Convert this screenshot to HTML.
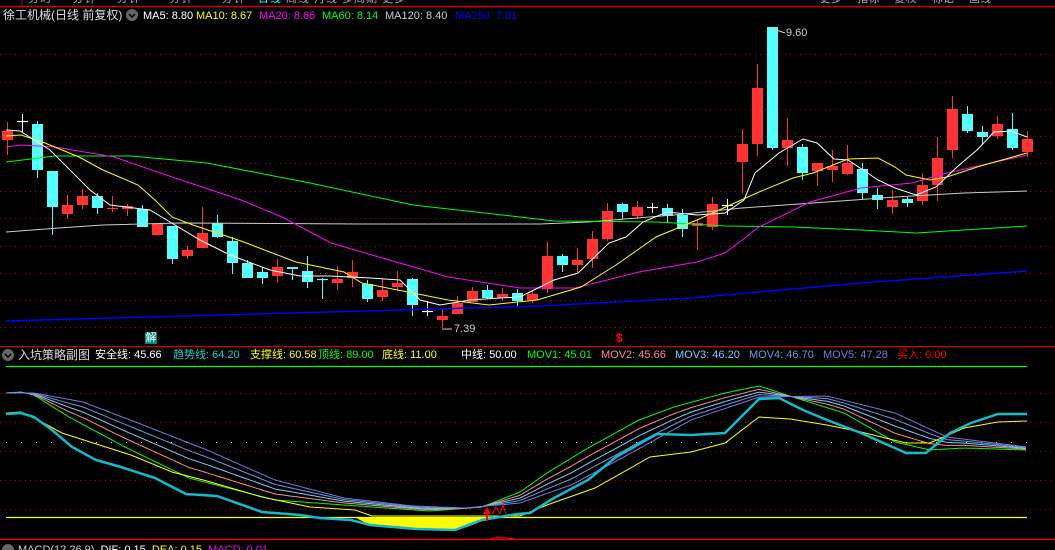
<!DOCTYPE html>
<html><head><meta charset="utf-8"><style>
html,body{margin:0;padding:0;background:#000;width:1055px;height:550px;overflow:hidden}
body{position:relative;font-family:"Liberation Sans","Noto Sans CJK SC",sans-serif;font-size:11px}
.t{position:absolute;white-space:nowrap;line-height:14px}
svg{position:absolute;left:0;top:0}
</style></head><body>
<svg id="s" width="1055" height="550" viewBox="0 0 1055 550"></svg>
<div class="t" style="left:0;top:-8px;color:#aaa;letter-spacing:1px">&nbsp;&nbsp;&nbsp;&nbsp;&nbsp;&nbsp;&nbsp;分时&nbsp;&nbsp;&nbsp;&nbsp;&nbsp;分钟&nbsp;&nbsp;&nbsp;&nbsp;&nbsp;分钟&nbsp;&nbsp;&nbsp;&nbsp;&nbsp;&nbsp;&nbsp;分钟&nbsp;&nbsp;&nbsp;&nbsp;&nbsp;&nbsp;&nbsp;分钟&nbsp;&nbsp;&nbsp;<span style="color:#0ff">日线</span>&nbsp;周线&nbsp;月线&nbsp;多周期&nbsp;更多</div>
<div class="t" style="left:820px;top:-8px;color:#aaa">更多&nbsp;&nbsp;&nbsp;&nbsp;&nbsp;指标&nbsp;&nbsp;&nbsp;&nbsp;&nbsp;复权&nbsp;&nbsp;&nbsp;&nbsp;&nbsp;标记&nbsp;&nbsp;&nbsp;&nbsp;&nbsp;画线</div>
<div class="t" style="left:3px;top:8px;color:#ddd;font-size:12px">徐工机械(日线 前复权)</div>
<div class="t" style="left:143px;top:9px;color:#fff">MA5: 8.80</div>
<div class="t" style="left:196px;top:9px;color:#ff0">MA10: 8.67</div>
<div class="t" style="left:259px;top:9px;color:#f0f">MA20: 8.66</div>
<div class="t" style="left:322px;top:9px;color:#0f0">MA60: 8.14</div>
<div class="t" style="left:385px;top:9px;color:#ccc">MA120: 8.40</div>
<div class="t" style="left:455px;top:9px;color:#0000ff">MA250: 7.81</div>
<div class="t" style="left:786px;top:26px;color:#ccc">9.60</div>
<div class="t" style="left:454px;top:322px;color:#ccc">7.39</div>
<div class="t" style="left:145px;top:332px;width:12px;height:12px;background:#088;color:#fff;font-size:11px;line-height:12px;text-align:center">解</div>
<div class="t" style="left:616px;top:331px;color:#f00;font-weight:bold;font-size:12px">$</div>
<div class="t" style="left:18px;top:348px;color:#ddd;font-size:12px">入坑策略副图</div>
<div class="t" style="left:95px;top:348px;color:#fff">安全线: 45.66</div>
<div class="t" style="left:173px;top:348px;color:#1cc">趋势线: 64.20</div>
<div class="t" style="left:250px;top:348px;color:#ff0">支撑线: 60.58</div>
<div class="t" style="left:318px;top:348px;color:#0f0">顶线: 89.00</div>
<div class="t" style="left:382px;top:348px;color:#ff0">底线: 11.00</div>
<div class="t" style="left:461px;top:348px;color:#fff">中线: 50.00</div>
<div class="t" style="left:527px;top:348px;color:#0f0">MOV1: 45.01</div>
<div class="t" style="left:601px;top:348px;color:#f88">MOV2: 45.66</div>
<div class="t" style="left:675px;top:348px;color:#7cf">MOV3: 46.20</div>
<div class="t" style="left:749px;top:348px;color:#69d">MOV4: 46.70</div>
<div class="t" style="left:823px;top:348px;color:#77d">MOV5: 47.28</div>
<div class="t" style="left:897px;top:348px;color:#f00">买入: 0.00</div>
<div class="t" style="left:18px;top:543px;color:#ccc">MACD(12,26,9)&nbsp;&nbsp;<span style="color:#fff">DIF: 0.15</span>&nbsp;&nbsp;<span style="color:#ff0">DEA: 0.15</span>&nbsp;&nbsp;<span style="color:#f0f">MACD: 0.01</span></div>
<script>
var s=document.getElementById('s'),h='';
function L(x1,y1,x2,y2,c,w,d){h+='<line x1="'+x1+'" y1="'+y1+'" x2="'+x2+'" y2="'+y2+'" stroke="'+c+'" stroke-width="'+(w||1)+'"'+(d?' stroke-dasharray="'+d+'"':'')+'/>';}
function P(pts,c,w){h+='<polyline fill="none" stroke="'+c+'" stroke-width="'+(w||1)+'" points="'+pts.map(p=>p.join(',')).join(' ')+'"/>';}
L(0,6.5,1055,6.5,'#c00',1.5);L(22,0,22,6,'#c00');
[54,82,109,136,163,191,218,246,273,300,327].forEach(y=>L(0,y+.5,1055,y+.5,'#a00',1,'1,4'));
L(0,346.5,1055,346.5,'#c00',1.2);
var C=[[1,131,140,122,155],[2,121,121,114,133],[0,124,170,121,178],[0,171,207,171,235],[1,205,214,195,219],[1,196,205,189,209],[0,196,208,193,214],[1,208,208,196,212],[1,206,209,204,216],[0,209,227,205,227],[1,224,235,224,235],[0,226,259,226,264],[1,250,256,246,259],[1,233,248,207,248],[0,223,237,215,238],[0,241,263,237,274],[0,263,278,260,278],[0,272,278,267,284],[1,267,276,259,283],[0,267,269,267,280],[0,271,282,256,288],[0,279,279,278,299],[1,279,283,266,290],[1,272,278,260,287],[0,284,299,280,302],[1,290,297,279,301],[1,283,287,271,291],[0,279,305,278,316],[2,311,311,301,316],[1,316,320,309,328],[1,303,314,296,314],[1,291,302,287,302],[0,290,298,285,299],[1,294,298,288,301],[0,293,301,289,306],[1,294,300,291,303],
[1,256,289,242,293],[0,256,265,254,272],[1,260,265,248,272],[1,239,259,231,268],[1,211,239,203,241],[0,204,212,203,219],[1,207,216,201,219],[2,207,207,203,213],[0,208,216,204,223],[0,215,229,209,237],[1,223,226,219,250],[1,204,227,197,230],[2,205,205,199,215],[1,144,162,129,193],[1,88,144,64,156],[0,27,148,27,150],[1,140,148,118,166],[0,147,173,144,180],[1,163,171,163,186],[1,166,170,150,182],[1,163,174,145,175],[0,169,193,163,200],[0,195,200,188,209],[1,200,207,190,214],[0,199,203,197,207],[1,185,201,173,205],[1,158,185,137,201],[1,109,150,96,158],[0,114,131,106,133],[0,132,137,126,145],[1,124,136,116,139],[0,129,148,113,150],[1,139,152,131,157]];
var n=C.length;
C.forEach((c,i)=>{var x=Math.round(7+i*(1020/(n-1)));var col=c[0]==1?'#ff3333':c[0]==0?'#55ffff':'#fff';
 L(x+.5,c[3],x+.5,c[4],col,1);
 if(c[2]-c[1]<1){L(x-5,c[1]+.5,x+6,c[1]+.5,col,1.2);}
 else h+='<rect x="'+(x-5)+'" y="'+c[1]+'" width="11" height="'+(c[2]-c[1])+'" fill="'+col+'"/>';});
P([[6,232],[59,228],[103,225],[179,223],[362,224],[540,224],[588,222],[674,215],[742,208],[827,202],[895,197],[964,193],[1027,191]],'#ccc');
P([[6,321],[540,306],[691,298],[861,283],[1027,271]],'#0000ff',1.5);
P([[6,162],[55,156],[131,156],[207,163],[310,183],[413,205],[520,217],[554,221],[657,222],[725,226],[793,227],[861,230],[916,233],[964,230],[1027,226]],'#0f0');
P([[6,147],[21,145],[55,147],[114,157],[172,177],[241,200],[282,217],[331,243],[379,257],[448,277],[520,288],[575,288],[639,272],[697,262],[725,253],[759,227],[810,202],[861,188],[912,183],[947,173],[1027,155]],'#f0f');
P([[6,136],[21,135],[45,143],[79,157],[103,170],[138,185],[155,200],[172,217],[193,225],[241,241],[296,262],[344,272],[362,283],[413,293],[448,300],[489,305],[537,300],[581,287],[616,265],[656,237],[697,220],[759,192],[793,178],[813,173],[848,159],[878,158],[895,167],[906,175],[930,180],[947,177],[977,167],[1027,153]],'#ff0');
P([[6,130],[20,131],[50,150],[90,190],[110,205],[150,210],[170,222],[200,240],[230,255],[270,270],[300,276],[330,276],[370,278],[400,280],[420,300],[440,305],[470,300],[500,298],[520,297],[554,280],[578,273],[609,243],[626,237],[643,222],[667,212],[697,215],[725,213],[744,200],[755,173],[779,153],[803,139],[817,143],[834,159],[848,160],[878,180],[895,188],[916,195],[936,187],[957,167],[977,150],[994,132],[1011,131],[1027,137]],'#fff');
L(770,28,785,33,'#ccc');L(442,329,452,329,'#ccc');
L(6,366.5,1027,366.5,'#0f0',1.2);
[393,422,451,480,509].forEach(y=>L(0,y+.5,1055,y+.5,'#a00',1,'1,4'));
L(6,442.5,1027,442.5,'#fff',1,'1,14');
L(6,517.5,1027,517.5,'#ff0',1.2);
L(0,539.5,1055,539.5,'#e00',1.5);
P([[490,539],[500,537],[506,538],[515,539]],'#f00',1);
function interp(pts,x){for(var i=1;i<pts.length;i++){if(x<=pts[i][0]){var a=pts[i-1],b=pts[i];return a[1]+(b[1]-a[1])*(x-a[0])/(b[0]-a[0]);}}return pts[pts.length-1][1];}
var G=[[6,393],[21,392],[34,395],[69,417],[127,448],[189,478],[275,500],[344,505],[430,511],[482,507],[520,492],[547,473],[588,448],[639,420],[674,407],[725,393],[759,386],[793,397],[844,413],[895,442],[930,450],[964,448],[1027,450]];
var U=[[6,393],[34,393],[83,402],[138,423],[207,450],[275,480],[344,498],[413,506],[465,508],[520,503],[571,485],[622,458],[691,420],[759,397],[827,396],[895,413],[947,437],[1027,447]];
h+='<polygon fill="#ff0" points="300,517 355,517 360,520 370,525 417,529 455,530 470,526 482,520 500,517 300,517"/>';
[['#0f0',0],['#f88',.3],['#7cf',.55],['#69d',.78],['#77d',1]].forEach(c=>{var pts=[];for(var x=6;x<=1027;x+=3){var g=interp(G,x),u=interp(U,x);pts.push([x,(g+(u-g)*c[1]).toFixed(1)]);}P(pts,c[0],1);});
P([[6,413],[21,412],[38,420],[62,433],[90,442],[131,455],[172,472],[207,481],[262,497],[310,507],[355,510],[372,516],[520,516],[547,505],[595,488],[650,457],[691,452],[725,443],[759,417],[790,419],[827,425],[861,432],[906,443],[930,443],[964,428],[998,422],[1027,421]],'#ff0',1);
P([[6,414],[21,413],[34,417],[52,430],[72,447],[96,460],[121,467],[155,478],[186,494],[217,496],[262,512],[300,515],[320,518],[351,520],[370,525],[417,529],[455,530],[482,520],[517,514],[530,513],[554,498],[588,480],[616,457],[657,434],[691,435],[725,433],[759,399],[779,398],[803,410],[827,420],[861,433],[906,453],[926,453],[950,433],[971,423],[998,414],[1027,414]],'#1bc',2.5);
h+='<polygon fill="#f00" points="487,507 483,514 486,514 486,521 488,521 488,514 491,514"/>';
P([[492,514],[496,507],[500,514]],'#f00',1);P([[500,514],[503,505],[506,514]],'#f00',1);
h+='<circle cx="132" cy="15" r="6" fill="#666"/><path d="M129 14 L132 17 L135 14" stroke="#000" stroke-width="1.5" fill="none"/>';
h+='<circle cx="8" cy="355" r="6" fill="#666"/><path d="M5 354 L8 357 L11 354" stroke="#000" stroke-width="1.5" fill="none"/>';
h+='<circle cx="8" cy="550" r="6" fill="#666"/>';
s.innerHTML=h;
</script>
</body></html>
